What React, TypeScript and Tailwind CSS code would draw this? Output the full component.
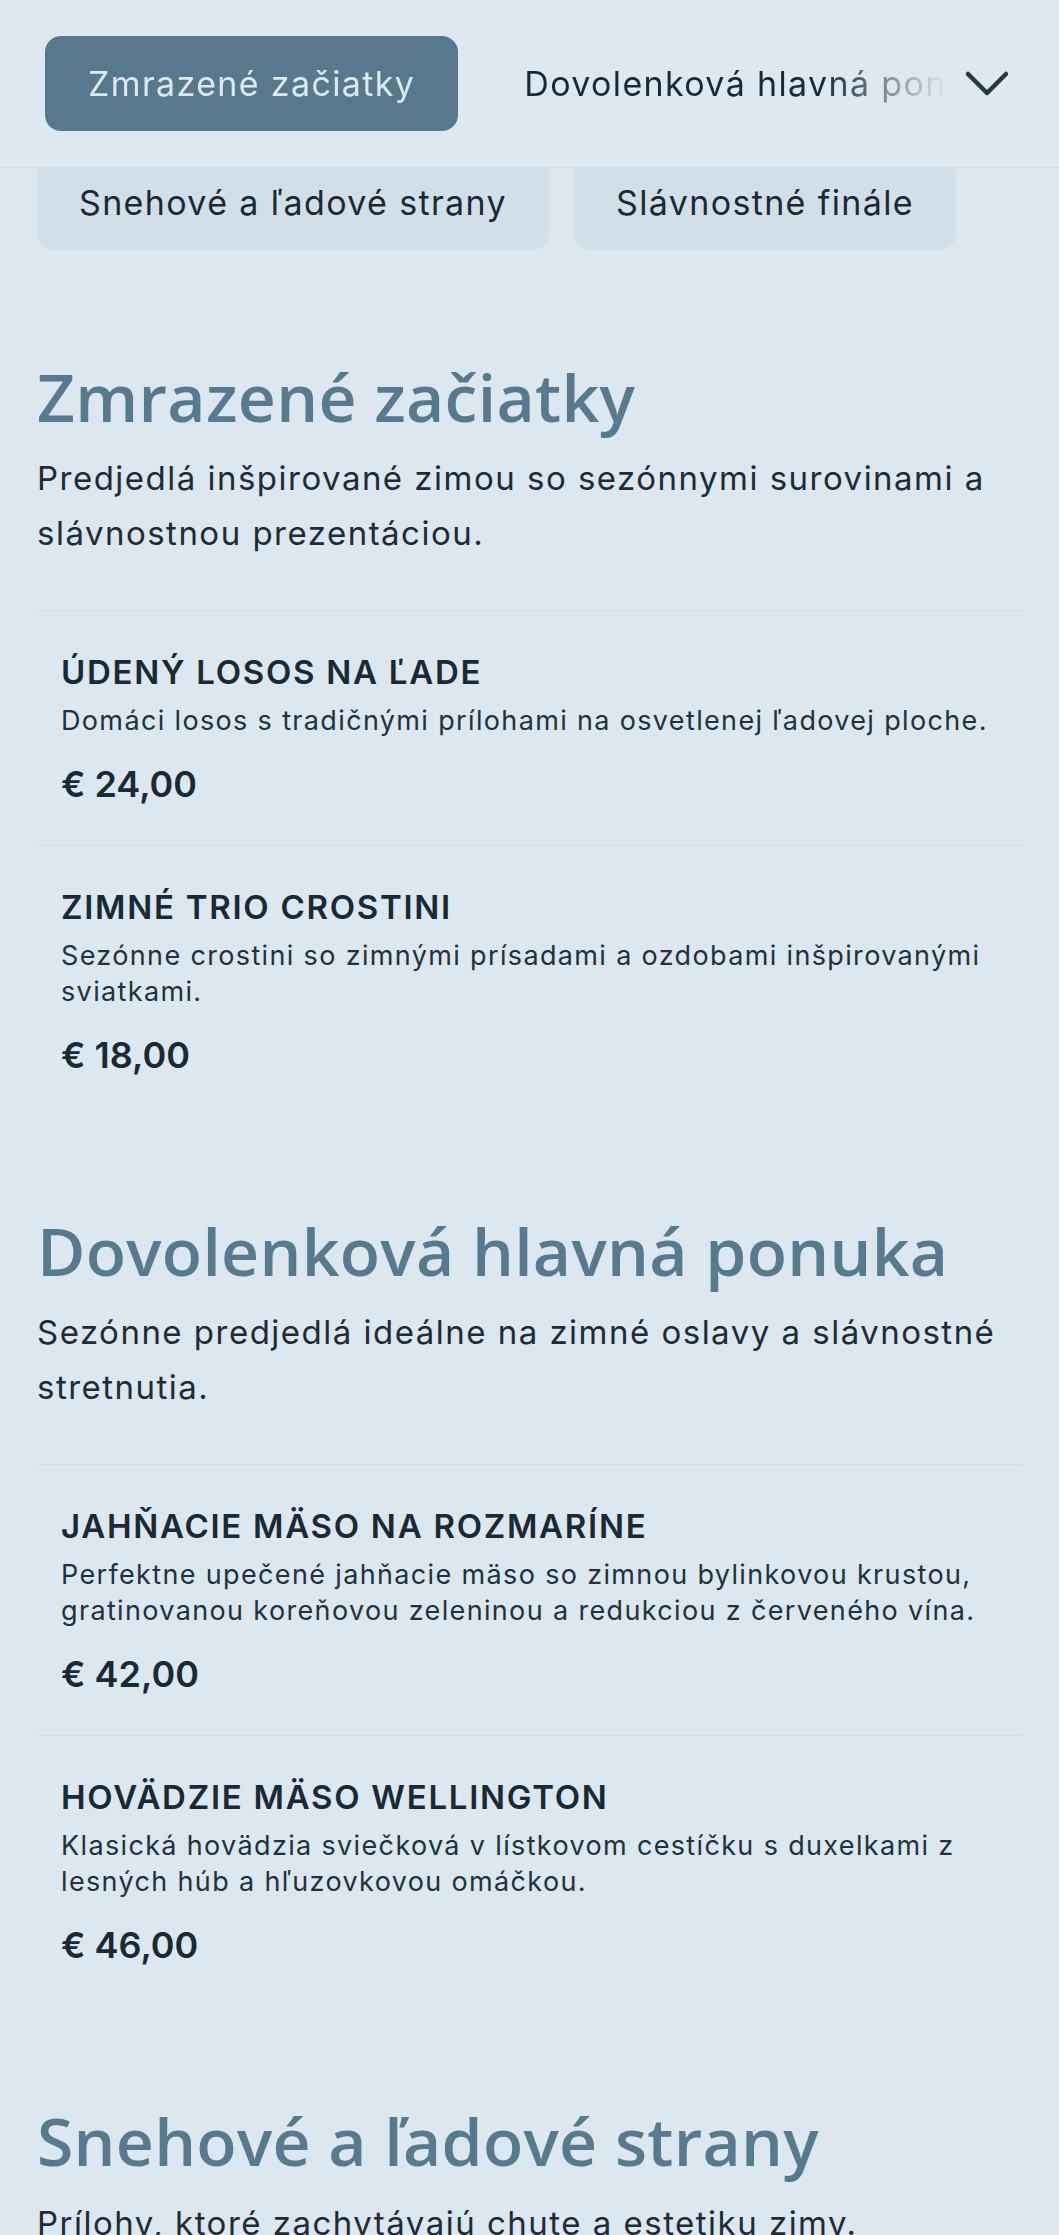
import { useState } from 'react'

type Dish = { name: string; desc: string; price: string }
type Section = { id: string; title: string; intro: string; dishes: Dish[] }

const sections: Section[] = [
  {
    id: 'zaciatky',
    title: 'Zmrazené začiatky',
    intro: 'Predjedlá inšpirované zimou so sezónnymi surovinami a slávnostnou prezentáciou.',
    dishes: [
      { name: 'ÚDENÝ LOSOS NA ĽADE', desc: 'Domáci losos s tradičnými prílohami na osvetlenej ľadovej ploche.', price: '€ 24,00' },
      { name: 'ZIMNÉ TRIO CROSTINI', desc: 'Sezónne crostini so zimnými prísadami a ozdobami inšpirovanými sviatkami.', price: '€ 18,00' },
    ],
  },
  {
    id: 'hlavna',
    title: 'Dovolenková hlavná ponuka',
    intro: 'Sezónne predjedlá ideálne na zimné oslavy a slávnostné stretnutia.',
    dishes: [
      { name: 'JAHŇACIE MÄSO NA ROZMARÍNE', desc: 'Perfektne upečené jahňacie mäso so zimnou bylinkovou krustou, gratinovanou koreňovou zeleninou a redukciou z červeného vína.', price: '€ 42,00' },
      { name: 'HOVÄDZIE MÄSO WELLINGTON', desc: 'Klasická hovädzia sviečková v lístkovom cestíčku s duxelkami z lesných húb a hľuzovkovou omáčkou.', price: '€ 46,00' },
    ],
  },
  {
    id: 'strany',
    title: 'Snehové a ľadové strany',
    intro: 'Prílohy, ktoré zachytávajú chute a estetiku zimy.',
    dishes: [],
  },
]

const tabs = ['Zmrazené začiatky', 'Dovolenková hlavná ponuka', 'Snehové a ľadové strany', 'Slávnostné finále']

function Chevron() {
  return (
    <svg width="46" height="28" viewBox="0 0 46 28" fill="none">
      <polyline points="4,4 23,23 42,4" stroke="#27363f" strokeWidth="4.5" strokeLinecap="round" strokeLinejoin="round" />
    </svg>
  )
}

export default function App() {
  const [active, setActive] = useState(0)

  return (
    <div className="min-h-screen bg-[#dce7ef] font-['Inter',sans-serif] text-[#1a2a35]">
      {/* Sticky category bar */}
      <header className="sticky top-0 z-20 h-[168px] flex items-center bg-[#dde8f0] border-b border-[#d0dde7] pl-[45px] pr-[32px]">
        <nav className="flex-1 min-w-0 flex gap-[23px] overflow-hidden [mask-image:linear-gradient(to_right,black_calc(100%_-_125px),transparent_100%)]">
          {tabs.map((t, i) => (
            <button
              key={t}
              onClick={() => setActive(i)}
              className={`shrink-0 h-[95px] px-[43px] rounded-[16px] text-[34px] tracking-[0.04em] whitespace-nowrap ${
                i === active ? 'bg-[#58788d] text-[#dde9f1]' : 'text-[#1a2a35]'
              }`}
            >
              {t}
            </button>
          ))}
        </nav>
        <button className="w-[80px] h-[80px] flex items-center justify-center shrink-0">
          <Chevron />
        </button>
      </header>

      {/* Remaining categories peeking below the bar */}
      <div className="h-[82px] overflow-hidden flex items-start gap-[25px] px-[37px]">
        {tabs.slice(2).map((t) => (
          <button key={t} className="-mt-[13px] h-[95px] px-[42px] rounded-[16px] bg-[#d2dfe8] text-[34px] tracking-[0.04em] text-[#1a2a35] whitespace-nowrap">
            {t}
          </button>
        ))}
      </div>

      <main className="px-[37px] pt-[107px] flex flex-col gap-[95px]">
        {sections.map((s) => (
          <section key={s.id}>
            <h2 className="font-['Open_Sans',sans-serif] font-semibold text-[66px] leading-[1.2] tracking-[0.3px] text-[#587a8f]">{s.title}</h2>
            <p className="mt-[15px] text-[33px] leading-[55px] tracking-[0.045em] text-[#1d2c37]">{s.intro}</p>
            {s.dishes.length > 0 && (
              <ul className="mt-[49px]">
                {s.dishes.map((d) => (
                  <li key={d.name} className="border-t border-[#d0dde7] px-[24px] py-[41px]">
                    <h3 className="text-[33px] leading-[40px] tracking-[0.052em] font-semibold text-[#1a2a35]">{d.name}</h3>
                    <p className="mt-[11px] text-[27px] leading-[36px] tracking-[0.05em] text-[#22323d]">{d.desc}</p>
                    <div className="mt-[25px] text-[36px] leading-[40px] font-semibold text-[#1a2a35]">{d.price}</div>
                  </li>
                ))}
              </ul>
            )}
          </section>
        ))}
      </main>
    </div>
  )
}
